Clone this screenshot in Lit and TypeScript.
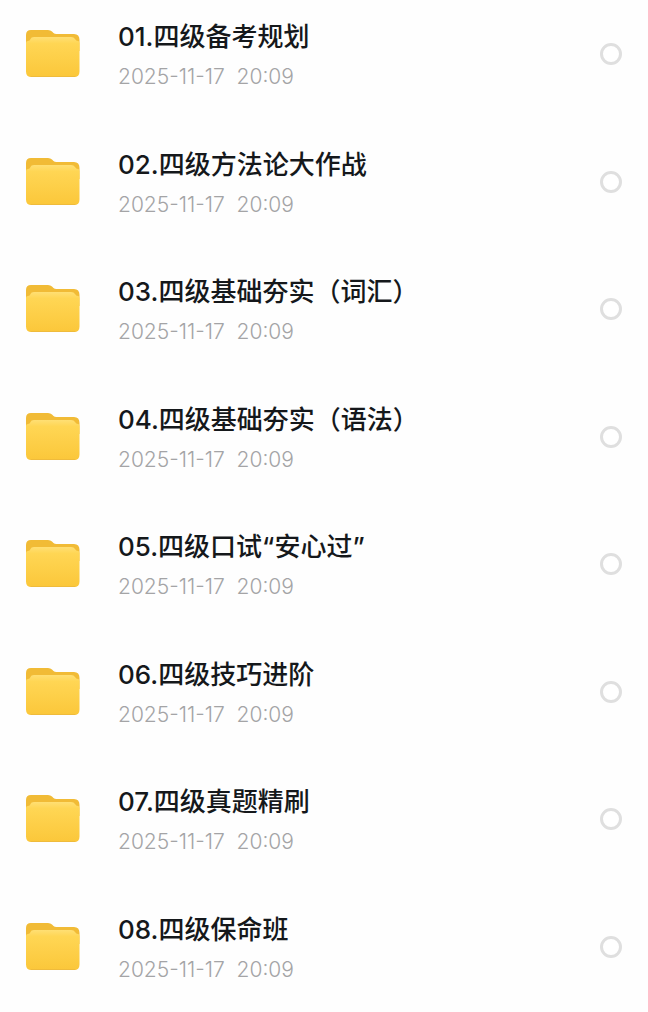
import { LitElement, html, css } from "lit";
import { customElement, property } from "lit/decorators.js";

interface Folder {
  name: string;
  modified: string;
}

const MODIFIED = "2025-11-17  20:09";

const FOLDERS: Folder[] = [
  "01.四级备考规划",
  "02.四级方法论大作战",
  "03.四级基础夯实（词汇）",
  "04.四级基础夯实（语法）",
  "05.四级口试“安心过”",
  "06.四级技巧进阶",
  "07.四级真题精刷",
  "08.四级保命班",
].map((name) => ({ name, modified: MODIFIED }));

@customElement("folder-icon")
export class FolderIcon extends LitElement {
  static styles = css`
    :host {
      display: block;
      line-height: 0;
    }
  `;

  render() {
    return html`
      <svg width="54" height="50" viewBox="0 0 54 50" aria-hidden="true">
        <defs>
          <linearGradient id="front" x1="0" y1="0" x2="0" y2="1">
            <stop offset="0" stop-color="#ffdf74" />
            <stop offset="0.16" stop-color="#ffd654" />
            <stop offset="1" stop-color="#fbc73a" />
          </linearGradient>
        </defs>
        <path
          fill="#f1bb36"
          d="M0 6Q0 1 5 1H22Q24.500 1 26 2.500L27.500 4Q28.500 5 30.500 5H48Q53.500 5 53.500 11V22H0Z"
        />
        <path
          fill="url(#front)"
          d="M0 14Q0 12 2 12Q4 12 4.500 10Q5 8 8 8H45Q48 8 49 10Q50 12 52 12Q53.500 12 53.500 14V42.500Q53.500 48 48 48H5.500Q0 48 0 42.500Z"
        />
        <path
          d="M5 47.500H49"
          stroke="#efbb3c"
          stroke-width="1"
          stroke-linecap="round"
        />
      </svg>
    `;
  }
}

@customElement("folder-row")
export class FolderRow extends LitElement {
  @property({ attribute: false }) folder!: Folder;

  static styles = css`
    :host {
      display: block;
    }
    .row {
      display: flex;
      align-items: center;
      gap: 38px;
    }
    .text {
      flex: 1;
      min-width: 0;
      padding-top: 6px;
    }
    .name {
      display: block;
      font-size: 26px;
      line-height: 40px;
      font-weight: 500;
      color: #15181b;
    }
    .modified {
      display: block;
      font-size: 21px;
      line-height: 40px;
      font-weight: 300;
      white-space: pre;
      color: #a4a4a6;
    }
    .check {
      appearance: none;
      flex: none;
      box-sizing: border-box;
      width: 22px;
      height: 22px;
      margin: 0;
      border: 3px solid #dfdfdf;
      border-radius: 50%;
      background: #fff;
    }
    .check:checked {
      border: 7px solid #fbc838;
    }
  `;

  render() {
    return html`
      <label class="row">
        <folder-icon></folder-icon>
        <span class="text">
          <span class="name">${this.folder.name}</span>
          <time class="modified">${this.folder.modified}</time>
        </span>
        <input class="check" type="checkbox" />
      </label>
    `;
  }
}

@customElement("app-root")
export class AppRoot extends LitElement {
  static styles = css`
    :host {
      display: block;
      background: #fefefe;
      font-family: Inter, "Noto Sans CJK SC", sans-serif;
    }
    .list {
      box-sizing: border-box;
      display: flex;
      flex-direction: column;
      justify-content: space-between;
      min-height: 100vh;
      margin: 0;
      padding: 11px 26px 22px;
      list-style: none;
    }
  `;

  render() {
    return html`
      <ul class="list">
        ${FOLDERS.map(
          (folder) => html`<li><folder-row .folder=${folder}></folder-row></li>`
        )}
      </ul>
    `;
  }
}
